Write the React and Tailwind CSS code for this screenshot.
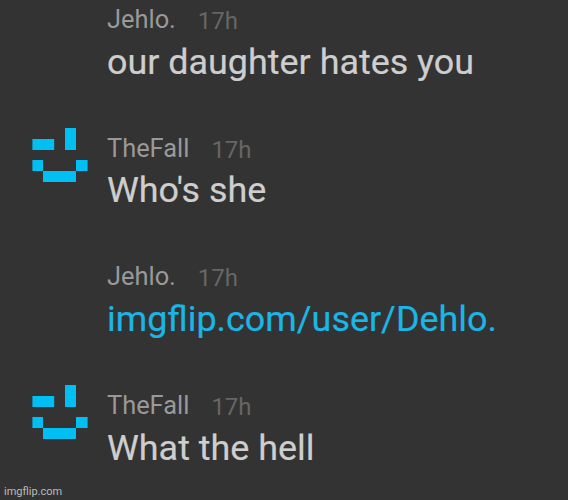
const messages = [
  { author: 'Jehlo.', text: 'our daughter hates you', row: 'h-[129px]', body: 'mt-[6px]' },
  { author: 'TheFall', text: "Who's she", avatar: true, row: 'h-32', body: 'mt-[5px]' },
  { author: 'Jehlo.', text: 'imgflip.com/user/Dehlo.', link: true, row: 'h-[129px]', body: 'mt-[6px]' },
  { author: 'TheFall', text: 'What the hell', avatar: true, row: 'h-[114px]', body: 'mt-[6px]' },
];

function Avatar() {
  return (
    <svg className="mt-[7px] block h-[54px] w-14" viewBox="0 0 56 54" fill="#00bff3" aria-hidden="true">
      <path d="M.4 11h21.8v11H.4zM33 0h11v22H33zM.4 32H11v11H.4zM44 32h11.6v11H44zM11 43h33v11H11z" />
    </svg>
  );
}

function Message({ author, text, avatar, link, row, body }) {
  return (
    <article className={`flex ${row}`}>
      <div className="w-[107px] shrink-0 pl-8">{avatar && <Avatar />}</div>
      <div className="whitespace-nowrap">
        <header className="flex h-[42px] items-baseline pt-3 leading-[30px]">
          <span className="text-[25.4px] text-[#999]">{author}</span>
          <span className="ml-[22px] translate-y-px text-[24px] text-[#666]">17h</span>
        </header>
        <p className={`text-[35.9px] leading-[44px] [-webkit-text-stroke-width:0.2px] ${body} ${link ? 'text-[#1ab6e6]' : 'text-[#cecece]'}`}>{text}</p>
      </div>
    </article>
  );
}

export default function App() {
  return (
    <main className="flex h-[500px] w-[568px] flex-col overflow-hidden bg-[#333] font-['Roboto',sans-serif]">
      <div className="-mt-2 flex flex-col">
        {messages.map((m, i) => (
          <Message key={i} {...m} />
        ))}
      </div>
      <footer className="-mt-[8px] pl-1 text-[11px] leading-4 text-[#bbb]">imgflip.com</footer>
    </main>
  );
}
